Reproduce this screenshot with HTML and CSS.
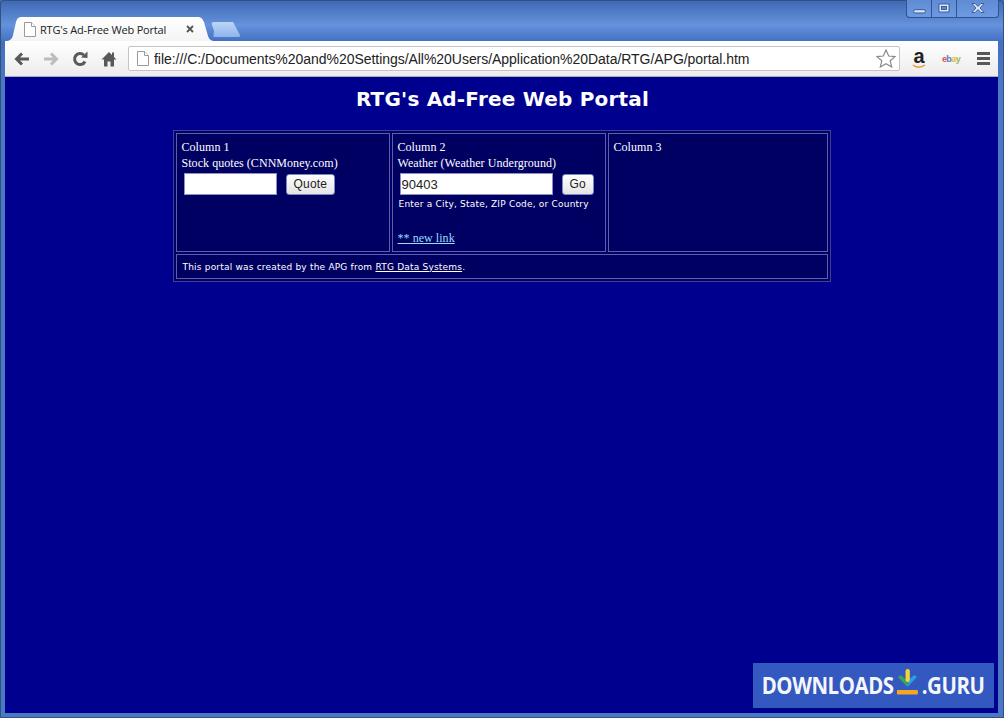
FILE: index.html
```html
<!DOCTYPE html>
<html lang="en">
<head>
  <meta charset="UTF-8">
  <title>RTG's Ad-Free Web Portal</title>
  <link rel="stylesheet" href="styles.css">
</head>
<body>
  <div class="window">
    <div class="window-controls">
      <div class="control">
        <svg viewBox="0 0 12 8" class="control-min"><rect x="0.5" y="2.5" width="11" height="3" rx="1.5"></rect></svg>
      </div>
      <div class="control">
        <svg viewBox="0 0 12 10" class="control-max"><rect x="1" y="1" width="10" height="8"></rect><rect x="3.5" y="3.5" width="5" height="3"></rect></svg>
      </div>
      <div class="control control-close">
        <svg viewBox="0 0 16 10" class="control-x"><path d="M2 0.5h3l3 3 3-3h3l-4 4.5 4 4.5h-3l-3-3-3 3h-3l4-4.5z"></path></svg>
      </div>
    </div>

    <div class="tabstrip">
      <div class="tab">
        <svg class="page-icon" viewBox="0 0 12 15"><path d="M0.5 0.5h7l4 4v10h-11z"></path><path d="M7.5 0.5v4h4"></path></svg>
        <span class="tab-title">RTG's Ad-Free Web Portal</span>
        <svg class="tab-close" viewBox="0 0 8 8"><path d="M1 1l6 6M7 1l-6 6"></path></svg>
      </div>
      <div class="new-tab"></div>
    </div>

    <div class="toolbar">
      <svg class="tool" viewBox="0 0 16 14"><path class="arrow" d="M15 7H3M8 1.5L2.500 7 8 12.500"></path></svg>
      <svg class="tool tool-off" viewBox="0 0 16 14"><path class="arrow" d="M1 7h12M8 1.500L13.500 7 8 12.500"></path></svg>
      <svg class="tool" viewBox="0 0 16 16"><path class="arrow" d="M13 10.500A5.500 5.500 0 1 1 11.800 4"></path><path class="solid" d="M9 6.500L15.500 7V0.500z"></path></svg>
      <svg class="tool" viewBox="0 0 16 16"><path class="solid" d="M8 1L0.500 8.500H3V15.500H6.500V10.500H9.500V15.500H13V8.500H15.500L13 6V1.500H11V4z"></path></svg>
      <div class="omnibox">
        <svg class="page-icon" viewBox="0 0 12 15"><path d="M0.500 0.500h7l4 4v10h-11z"></path><path d="M7.500 0.500v4h4"></path></svg>
        <span class="url">file:///C:/Documents%20and%20Settings/All%20Users/Application%20Data/RTG/APG/portal.htm</span>
        <svg class="star" viewBox="0 0 20 19"><path d="M10 1l2.700 6 6.300.6-4.800 4.200 1.500 6.200L10 14.700 4.300 18l1.500-6.200L1 7.600 7.300 7z"></path></svg>
      </div>
      <div class="ext ext-amazon">
        <span class="amazon-a">a</span>
        <svg viewBox="0 0 14 5" class="amazon-smile"><path d="M1 1c3 3 8 3 12 0"></path></svg>
      </div>
      <div class="ext ext-ebay"><span class="e">e</span><span class="b">b</span><span class="a">a</span><span class="y">y</span></div>
      <div class="menu"><span></span><span></span><span></span></div>
    </div>

    <div class="viewport">
      <h1 class="portal-title">RTG's Ad-Free Web Portal</h1>
      <table class="portal">
        <tr>
          <td class="col-a">
            Column 1<br>
            Stock quotes (CNNMoney.com)
            <div class="form-row">
              <input class="field field-short" type="text">
              <button class="btn">Quote</button>
            </div>
          </td>
          <td class="col-b">
            Column 2<br>
            Weather (Weather Underground)
            <div class="form-row">
              <input class="field field-long" type="text" value="90403">
              <button class="btn">Go</button>
            </div>
            <div class="hint">Enter a City, State, ZIP Code, or Country</div>
            <a class="new-link" href="#">** new link</a>
          </td>
          <td class="col-c">Column 3</td>
        </tr>
        <tr>
          <td class="credit" colspan="3">This portal was created by the APG from <a href="#">RTG Data Systems</a>.</td>
        </tr>
      </table>

      <div class="guru-banner">
        <div class="guru-inner">
          <span>DOWNLOADS</span>
          <svg viewBox="0 0 24 26" class="guru-icon" preserveAspectRatio="none">
            <path class="g-green" d="M2 8l10 10V12L5 6z"></path>
            <path class="g-blue" d="M22 8L12 18V12l7-6z"></path>
            <rect class="g-yellow" x="10" y="0" width="4.500" height="13" rx="2.200"></rect>
            <rect class="g-orange" x="1" y="21" width="22" height="4.500" rx="1"></rect>
          </svg>
          <span>.GURU</span>
        </div>
      </div>
    </div>
  </div>
</body>
</html>
```

FILE: styles.css
```css
* {
  box-sizing: border-box;
}

html, body {
  margin: 0;
  height: 100%;
}

body {
  overflow: hidden;
  background: #3f6cb8;
}

/* Window frame */
.window {
  position: relative;
  display: flex;
  flex-direction: column;
  height: 718px;
  border: 1px solid #33507f;
  border-radius: 4px 4px 0 0;
  background: linear-gradient(to bottom, #4069b4 0, #6592dc 24px, #426fc0 41px, #4a78c4 80px);
}

.window-controls {
  position: absolute;
  top: -1px;
  right: 4px;
  display: flex;
  height: 18px;
  border: 1px solid #2f5390;
  border-top: none;
  border-radius: 0 0 4px 4px;
  background: linear-gradient(to bottom, #5f8bd4, #6d9ae2);
}

.control {
  display: flex;
  align-items: center;
  justify-content: center;
  width: 25px;
  border-right: 1px solid #2f5390;
}

.control-close {
  width: 41px;
  border-right: none;
}

.control-min {
  width: 13px;
  margin-top: 6px;
  fill: #d8e6fa;
  stroke: #2c4a80;
  stroke-width: 0.8;
}

.control-max {
  width: 12px;
  margin-top: -1px;
  fill: #d8e6fa;
  stroke: #2c4a80;
  stroke-width: 0.8;
}

.control-max rect + rect {
  fill: #5f8bd4;
}

.control-x {
  width: 16px;
  margin-top: -1px;
  fill: #dce8fb;
  stroke: #2c4a80;
  stroke-width: 0.8;
}

/* Tabs */
.tabstrip {
  display: flex;
  align-items: flex-start;
  height: 40px;
  padding: 16px 0 0 4px;
  flex-shrink: 0;
}

.tab {
  display: flex;
  align-items: center;
  width: 210px;
  height: 24px;
  padding: 0 21px 0 19px;
  background: linear-gradient(to bottom, #ffffff, #f4f4f4);
  clip-path: path("M0 24 C5 24 7 22 8 18 L11 5 C12 1 14 0 17 0 L192 0 C196 0 197 1 199 5 L203 19 C204 22 206 24 210 24 Z");
}

.page-icon {
  flex-shrink: 0;
  width: 12px;
  height: 15px;
  fill: #fff;
  stroke: #9a9a9a;
  stroke-width: 1;
}

.tab-title {
  flex: 1;
  margin-left: 4px;
  font: 11px "Open Sans", sans-serif;
  letter-spacing: -0.18px;
  color: #222;
  white-space: nowrap;
}

.tab-close {
  width: 8px;
  height: 8px;
  fill: none;
  stroke: #555;
  stroke-width: 1.8;
}

.new-tab {
  width: 30px;
  height: 15px;
  margin: 5px 0 0 -4px;
  background: linear-gradient(to bottom, #bcd5f7, #8fb4ec);
  clip-path: polygon(0 0, 22px 0, 30px 100%, 8% 100%, 3px 60%);
  border-radius: 3px;
}

/* Toolbar */
.toolbar {
  display: flex;
  align-items: center;
  flex-shrink: 0;
  height: 36px;
  margin: 0 5px 0 4px;
  padding: 0 9px 0 9px;
  background: linear-gradient(to bottom, #ffffff, #ececec);
  border-bottom: 1px solid #a8aeb8;
}

.tool {
  flex-shrink: 0;
  width: 16px;
  height: 16px;
  margin-right: 13px;
  color: #595959;
}

.tool-off {
  color: #bcbcbc;
}

.arrow {
  fill: none;
  stroke: currentColor;
  stroke-width: 3;
}

.solid {
  fill: currentColor;
}

.omnibox {
  display: flex;
  align-items: center;
  flex-shrink: 0;
  width: 772px;
  height: 25px;
  margin-left: -2px;
  padding: 0 3px 0 8px;
  background: #fff;
  border: 1px solid #c4c4c4;
  border-radius: 2px;
}

.url {
  flex: 1;
  margin-left: 5px;
  font: 14px "Liberation Sans", sans-serif;
  letter-spacing: -0.04px;
  color: #222;
  white-space: nowrap;
  overflow: hidden;
}

.star {
  flex-shrink: 0;
  width: 20px;
  height: 19px;
  fill: #fff;
  stroke: #8a8a8a;
  stroke-width: 1.2;
}

.ext {
  flex-shrink: 0;
}

.ext-amazon {
  position: relative;
  width: 14px;
  height: 21px;
  margin-left: 12px;
  text-align: center;
}

.amazon-a {
  display: block;
  font: bold 20px/16px "Liberation Sans", sans-serif;
  color: #222;
}

.amazon-smile {
  display: block;
  width: 14px;
  height: 5px;
  fill: none;
  stroke: #e8982a;
  stroke-width: 1.4;
}

.ext-ebay {
  width: 20px;
  margin-left: 15px;
  font: bold 9px "Liberation Sans", sans-serif;
  letter-spacing: -0.6px;
  text-align: center;
}

.ext-ebay .e { color: #e0524a; }
.ext-ebay .b { color: #5a78c8; }
.ext-ebay .a { color: #e0b84a; }
.ext-ebay .y { color: #9ab858; }

.menu {
  display: flex;
  flex-direction: column;
  gap: 2px;
  flex-shrink: 0;
  width: 13px;
  margin-left: 16px;
}

.menu span {
  display: block;
  height: 3px;
  background: #585858;
}

/* Page */
.viewport {
  position: relative;
  flex: 1;
  margin: 0 5px 4px 4px;
  background: #00008f;
  color: #fff;
}

.portal-title {
  margin: 0;
  padding: 9px 0 0 2px;
  font: bold 20px/26px "DejaVu Sans", sans-serif;
  letter-spacing: 0.2px;
  text-align: center;
}

.portal {
  width: 658px;
  margin: 18px auto 0;
  table-layout: fixed;
  border-collapse: separate;
  border-spacing: 2px;
  border: 1px solid #40408f;
  background: #00006c;
  font: 12px/16px "Liberation Serif", serif;
  letter-spacing: 0.05px;
}

.portal td {
  padding: 5px;
  border: 1px solid #5f5fa8;
  background: #000062;
  vertical-align: top;
}

.portal .col-a,
.portal .col-b {
  width: 214px;
  height: 119px;
}

.portal .credit {
  height: 25px;
  padding: 1px 5px 0 6px;
  vertical-align: middle;
  font: 9px/13px "DejaVu Sans", sans-serif;
  letter-spacing: 0.2px;
}

.credit a {
  color: #fff;
}

.form-row {
  display: flex;
  align-items: center;
  gap: 9px;
  margin: 2px 0 0 2px;
}

.field {
  height: 22px;
  padding: 0 1px;
  border: 1px solid #8f8fc8;
  background: #fff;
  font: 13px "Liberation Sans", sans-serif;
  color: #222;
}

.field-short {
  width: 93px;
}

.field-long {
  width: 153px;
}

.btn {
  height: 21px;
  padding: 0 7px;
  border: 1px solid #7c88c0;
  border-radius: 3px;
  background: linear-gradient(to bottom, #ffffff, #e4e4e4);
  font: 12px "Liberation Sans", sans-serif;
  letter-spacing: 0.2px;
  color: #222;
}

.hint {
  margin: 3px 0 0 1px;
  font: 9px/13px "DejaVu Sans", sans-serif;
  letter-spacing: 0.2px;
}

.new-link {
  display: block;
  margin-top: 19px;
  color: #99ddff;
}

/* Watermark */
.guru-banner {
  position: absolute;
  right: 4px;
  bottom: 5px;
  display: flex;
  align-items: center;
  justify-content: center;
  width: 241px;
  height: 45px;
  background: #3358bf;
  color: #f4f6fc;
}

.guru-inner {
  display: flex;
  align-items: center;
  gap: 3px;
  flex-shrink: 0;
  margin-top: -2px;
  font: bold 24px "Open Sans", sans-serif;
  letter-spacing: -0.5px;
  transform: scaleX(0.85);
}

.guru-icon {
  width: 27px;
  height: 26px;
  margin-top: -6px;
}

.g-green { fill: #3aa655; }
.g-blue { fill: #2f9be0; }
.g-yellow { fill: #f2d436; }
.g-orange { fill: #f5a623; }
```
